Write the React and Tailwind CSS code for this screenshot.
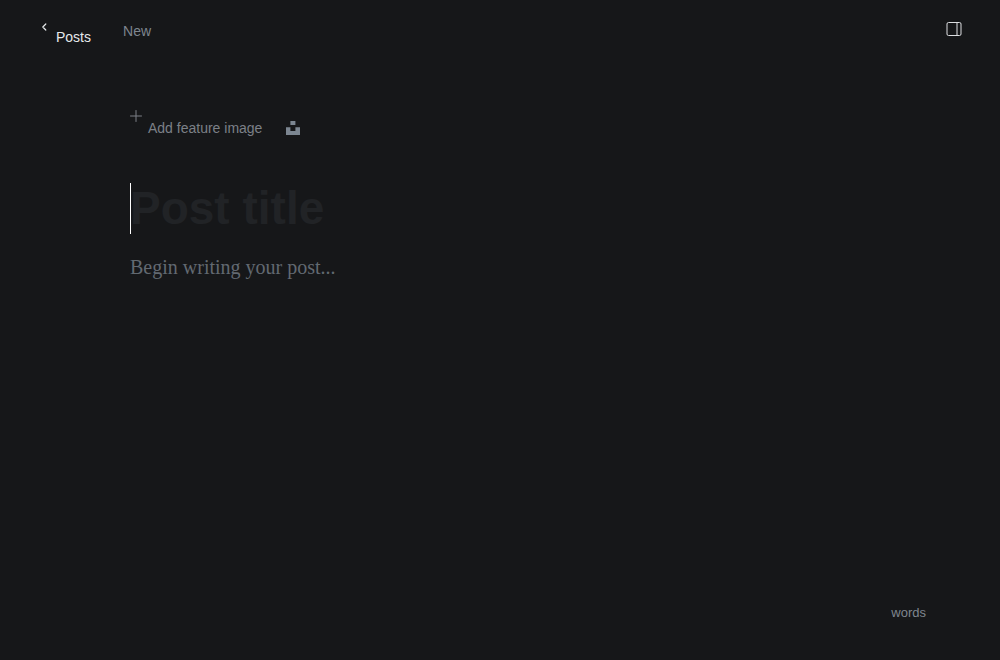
import React from "react";

function ChevronIcon() {
  return (
    <svg className="h-2 w-2" viewBox="0 0 8 8" fill="none" stroke="currentColor" strokeWidth="1.2" strokeLinecap="round" strokeLinejoin="round" aria-hidden="true">
      <path d="M5.8 1 2.8 4l3 3" />
    </svg>
  );
}

function SidebarIcon() {
  return (
    <svg className="h-4 w-4" viewBox="0 0 16 16" fill="none" stroke="currentColor" aria-hidden="true">
      <rect x="1" y="1.5" width="14" height="13" rx="1.5" />
      <path d="M11 1.5v13" />
    </svg>
  );
}

function PlusIcon() {
  return (
    <svg className="h-3 w-3" viewBox="0 0 12 12" fill="none" stroke="currentColor" strokeLinecap="round" aria-hidden="true">
      <path d="M6 .5v11M.5 6h11" />
    </svg>
  );
}

function UnsplashIcon() {
  return (
    <svg className="h-3.5 w-3.5" viewBox="0 0 14 14" fill="currentColor" aria-hidden="true">
      <path d="M4.4 0h5v4h-5zM9.4 6.2H14V14H0V6.2h4.4v3.9h5z" />
    </svg>
  );
}

function Header() {
  return (
    <header className="flex items-start justify-between px-[38px] pt-5">
      <nav className="flex items-start">
        <a href="#posts" className="flex items-start gap-2 pt-[3px] pl-[2px] text-[#e6e9eb]">
          <ChevronIcon />
          <span className="pt-[3px] leading-[22px]">Posts</span>
        </a>
        <span className="ml-8 leading-[22px] text-[#7f868f]">New</span>
      </nav>
      <button type="button" aria-label="Settings" className="pt-[1px] text-[#dddfe2]">
        <SidebarIcon />
      </button>
    </header>
  );
}

export default function App() {
  return (
    <div className="flex min-h-screen flex-col bg-[#161719] font-['Liberation_Sans',sans-serif] text-sm">
      <Header />
      <main className="mx-auto w-full max-w-[740px] grow pt-14">
        <div className="flex items-start gap-6">
          <button type="button" className="flex items-start gap-1.5 pt-1.5 text-[#7c8087]">
            <PlusIcon />
            <span className="pt-1.5 leading-6">Add feature image</span>
          </button>
          <button type="button" aria-label="Unsplash" className="pt-[17px] text-[#7c8691]">
            <UnsplashIcon />
          </button>
        </div>
        <div className="relative mt-[39px]">
          <input
            aria-label="Post title"
            placeholder="Post title"
            className="block h-[60px] w-full bg-transparent text-[46px] font-bold text-white outline-none placeholder:text-[#212326] placeholder:opacity-100"
          />
          <span className="absolute left-0 top-1 h-[51px] w-px bg-white" aria-hidden="true" />
        </div>
        <textarea
          aria-label="Post content"
          placeholder="Begin writing your post..."
          rows="4"
          className="mt-3 block w-full resize-none bg-transparent font-['Liberation_Serif',serif] text-xl leading-8 text-white outline-none placeholder:text-[#626971] placeholder:opacity-100"
        />
      </main>
      <footer className="flex justify-end pr-[74px] pb-[35px] text-[13px] leading-6 text-[#7f868f]">words</footer>
    </div>
  );
}
